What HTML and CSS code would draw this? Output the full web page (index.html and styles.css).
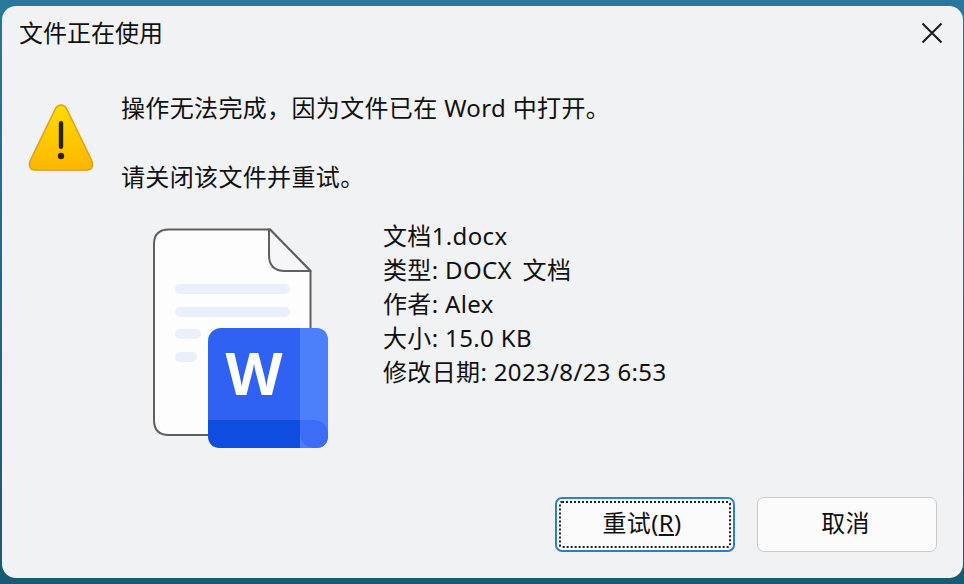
FILE: index.html
```html
<!DOCTYPE html>
<html lang="zh">
<head>
<meta charset="utf-8">
<title>文件正在使用</title>
<link rel="stylesheet" href="styles.css">
</head>
<body>
<div class="dialog">
  <header class="titlebar">
    <span class="title">文件正在使用</span>
    <svg class="close" width="24" height="24" viewBox="0 0 24 24"><path d="M2.500 2.500 L21.500 21.500 M21.500 2.500 L2.500 21.500" stroke="#1c1c1c" stroke-width="2" fill="none"/></svg>
  </header>
  <main class="content">
    <div class="message-row">
      <svg class="warn" width="68" height="72" viewBox="0 0 68 72">
        <defs>
          <linearGradient id="wg" x1="0" y1="0" x2="0" y2="1">
            <stop offset="0" stop-color="#ffdc00"/>
            <stop offset="1" stop-color="#fdb600"/>
          </linearGradient>
        </defs>
        <path d="M34 4 C31 4 29.500 5.500 28 8.500 L3.500 59 C1 65 3 69 8 69 L60 69 C65 69 67 65 64.500 59 L40 8.500 C38.500 5.500 37 4 34 4 Z" fill="url(#wg)" stroke="#e0a012" stroke-width="1.500"/>
        <rect x="31.800" y="20" width="4.400" height="28" rx="2.200" fill="#2a2418"/>
        <circle cx="34" cy="55" r="3.200" fill="#2a2418"/>
      </svg>
      <div class="messages">
        <p class="msg">操作无法完成，因为文件已在 Word 中打开。</p>
        <p class="msg">请关闭该文件并重试。</p>
      </div>
    </div>
    <div class="file-row">
      <svg class="file-icon" width="180" height="226" viewBox="150 226 180 226">
        <path d="M169 229.500 H270 L310.500 271 V420 Q310.500 435 296 435 H169 Q154 435 154 420 V244 Q154 229.500 169 229.500 Z" fill="#fdfdfe" stroke="#5f5f5f" stroke-width="2"/>
        <path d="M270 229.500 L310.500 271 H285 Q269 271 269 255 V229.500 Z" fill="#f6f6f8" stroke="#5f5f5f" stroke-width="2" stroke-linejoin="round"/>
        <rect x="175" y="284" width="115" height="10" rx="5" fill="#eaf0fa"/>
        <rect x="175" y="307" width="115" height="10" rx="5" fill="#eaf0fa"/>
        <rect x="175" y="329" width="26" height="10" rx="5" fill="#eaf0fa"/>
        <rect x="175" y="352" width="22" height="10" rx="5" fill="#eaf0fa"/>
        <rect x="208" y="328" width="120" height="120" rx="13" fill="#2f62f2"/>
        <path d="M300 328 H315 Q328 328 328 341 V435 Q328 448 315 448 H300 Z" fill="#4c80fb"/>
        <path d="M208 420 H300 V448 H221 Q208 448 208 435 Z" fill="#0e4de0"/>
        <path d="M300 420 H314 Q328 421 328 435 Q328 448 315 448 H312 Q300 446 300 432 Z" fill="#3c6cf8"/>
        <text class="w-letter" x="254" y="395" text-anchor="middle">W</text>
      </svg>
      <div class="details">
        <div>文档1.docx</div>
        <div>类型: DOCX<span class="wide-gap"> </span>文档</div>
        <div>作者: Alex</div>
        <div>大小: 15.0 KB</div>
        <div>修改日期: 2023/8/23 6:53</div>
      </div>
    </div>
  </main>
  <footer class="actions">
    <button class="btn btn-default" type="button"><span class="focus">重试(<u>R</u>)</span></button>
    <button class="btn" type="button"><span class="plain">取消</span></button>
  </footer>
</div>
</body>
</html>
```
FILE: styles.css
```css
* { box-sizing: border-box; }
html, body { height: 100%; }
body {
  margin: 0;
  padding: 6px 1px 6px 2px;
  background: linear-gradient(180deg, #27789a 0%, #1d6a88 50%, #175a73 100%);
  font-family: "Noto Sans", "Noto Sans CJK SC", sans-serif;
  font-size: 24px;
  font-weight: 400;
  letter-spacing: 0.35px;
  color: #111;
  overflow: hidden;
}
.dialog {
  height: 572px;
  background: #f1f2f4;
  border-radius: 14px;
  display: flex;
  flex-direction: column;
}
.titlebar {
  height: 54px;
  padding: 0 19px 0 17px;
  display: flex;
  justify-content: space-between;
  align-items: center;
}
.title { line-height: 38px; letter-spacing: 0; }
.close { display: block; }
.content { flex: 1; display: flex; flex-direction: column; }
.message-row {
  display: flex;
  padding: 31px 0 0 25px;
}
.warn { margin-top: 10px; flex: none; }
.messages { margin-left: 26px; }
.msg { margin: 0 0 35px; line-height: 34px; }
.file-row {
  display: flex;
  padding-left: 148px;
  margin-top: -3px;
}
.file-icon { display: block; flex: none; }
.details {
  margin-left: 53px;
  line-height: 34px;
  margin-top: -7px;
}
.wide-gap { word-spacing: 4px; }
.w-letter {
  font-family: "Noto Sans", sans-serif;
  font-weight: 700;
  font-size: 59px;
  letter-spacing: 0;
  fill: #fff;
}
.actions {
  display: flex;
  justify-content: flex-end;
  gap: 22px;
  padding: 0 26px 26px 0;
}
.btn {
  width: 180px;
  height: 55px;
  padding: 0;
  background: #fbfbfc;
  border: 1.500px solid #c9cacc;
  border-radius: 7px;
  font: inherit;
  letter-spacing: inherit;
  color: #111;
  line-height: 1;
}
.plain {
  display: flex;
  align-items: center;
  justify-content: center;
  height: 100%;
  padding: 0 3px 4px 0;
}
.btn-default {
  border: 2px solid #2f7fc4;
  padding: 2px;
}
.focus {
  display: flex;
  align-items: center;
  justify-content: center;
  height: 100%;
  padding: 0 6px 4px 0;
  border: 2px dotted #222;
  border-radius: 3px;
}
```
